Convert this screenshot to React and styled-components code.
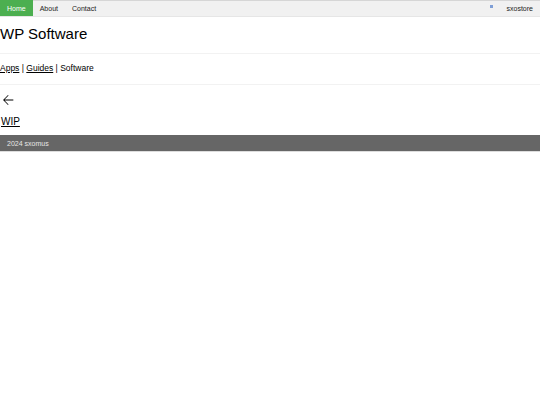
import React from 'react';
import styled, { createGlobalStyle } from 'styled-components';

const GlobalStyle = createGlobalStyle`
    body {
        margin: 0;
        background: #fff;
        font-family: "Liberation Sans", Arial, sans-serif;
        color: #000;
    }
`

export default function App() {
    return (
        <>
            <GlobalStyle />
            <Nav>
                <NavLink active>Home</NavLink>
                <NavLink>About</NavLink>
                <NavLink>Contact</NavLink>
                <Spacer />
                <NavLink><Dot /></NavLink>
                <NavLink>sxostore</NavLink>
            </Nav>
            <Main>
                <Title>WP Software</Title>
                <Rule />
                <Crumbs>
                    <CrumbLink>Apps</CrumbLink> | <CrumbLink>Guides</CrumbLink> | Software
                </Crumbs>
                <Rule />
                <Back>
                    <svg width="16" height="16" viewBox="0 0 24 24">
                        <path d="M20 11.3H6.9l5.9-5.9L12 4.6l-7.4 7.4 7.4 7.4.8-.8-5.9-5.9H20z" fill="#000" />
                    </svg>
                </Back>
                <Wip>WIP</Wip>
            </Main>
            <Footer>2024 sxomus</Footer>
        </>
    )
}

const Nav = styled.nav`
    display: flex;
    align-items: stretch;
    height: 15px;
    background: #f1f1f1;
    border-top: 1px solid #d6d6d6;
    border-bottom: 1px solid #e6e6e6;
`

const NavLink = styled.a`
    display: flex;
    align-items: center;
    padding: 0 7px;
    font-size: 7px;
    color: ${p => p.active ? '#fff' : '#222'};
    background: ${p => p.active ? '#4caf50' : 'transparent'};
    margin-top: ${p => p.active ? '-1px' : '0'};
`

const Spacer = styled.div`
    flex: 1;
`

const Dot = styled.span`
    width: 3px;
    height: 3px;
    background: #7f9fd6;
    margin-top: -4px;
`

const Main = styled.main`
    display: flex;
    flex-direction: column;
    align-items: flex-start;
`

const Title = styled.h1`
    margin: 8px 0 0;
    font-size: 15px;
    line-height: 17px;
    font-weight: normal;
`

const Rule = styled.hr`
    align-self: stretch;
    margin: 11px 0 0;
    border: none;
    border-top: 1px solid #f2f2f2;
    & + * { margin-top: 9px; }
`

const Crumbs = styled.div`
    font-size: 8.5px;
    line-height: 11px;
    & + hr { margin-top: 10px; }
`

const CrumbLink = styled.a`
    color: #000;
    text-decoration: underline;
`

const Back = styled.div`
    display: flex;
    height: 16px;
    && { margin-top: 7px; }
`

const Wip = styled.a`
    margin: 8px 0 0 1px;
    font-size: 10px;
    line-height: 12px;
    color: #000;
    text-decoration: underline;
`

const Footer = styled.footer`
    margin-top: 7px;
    height: 16px;
    display: flex;
    align-items: center;
    padding: 0 7px;
    background: #666;
    color: #e6e6e6;
    font-size: 7px;
    border-bottom: 1px solid #ddd;
`
